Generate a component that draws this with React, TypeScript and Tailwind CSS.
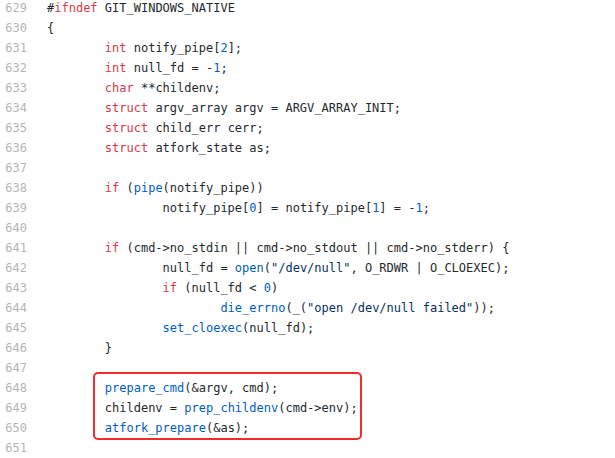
import React from "react";

type Tok = [string, string?];

const K = "text-[#d73a49]";
const F = "text-[#005cc5]";
const N = "text-[#005cc5]";
const S = "text-[#032f62]";

const T = "\t";

const lines: { n: number; t: Tok[] }[] = [
  { n: 629, t: [["#"], ["ifndef", K], [" GIT_WINDOWS_NATIVE"]] },
  { n: 630, t: [["{"]] },
  { n: 631, t: [[T], ["int", K], [" notify_pipe["], ["2", N], ["];"]] },
  { n: 632, t: [[T], ["int", K], [" null_fd = -"], ["1", N], [";"]] },
  { n: 633, t: [[T], ["char", K], [" **childenv;"]] },
  { n: 634, t: [[T], ["struct", K], [" argv_array argv = ARGV_ARRAY_INIT;"]] },
  { n: 635, t: [[T], ["struct", K], [" child_err cerr;"]] },
  { n: 636, t: [[T], ["struct", K], [" atfork_state as;"]] },
  { n: 637, t: [] },
  { n: 638, t: [[T], ["if", K], [" ("], ["pipe", F], ["(notify_pipe))"]] },
  { n: 639, t: [[T + T + "notify_pipe["], ["0", N], ["] = notify_pipe["], ["1", N], ["] = -"], ["1", N], [";"]] },
  { n: 640, t: [] },
  { n: 641, t: [[T], ["if", K], [" (cmd->no_stdin || cmd->no_stdout || cmd->no_stderr) {"]] },
  { n: 642, t: [[T + T + "null_fd = "], ["open", F], ["("], ['"/dev/null"', S], [", O_RDWR | O_CLOEXEC);"]] },
  { n: 643, t: [[T + T], ["if", K], [" (null_fd < "], ["0", N], [")"]] },
  { n: 644, t: [[T + T + T], ["die_errno", F], ["(_("], ['"open /dev/null failed"', S], ["));"]] },
  { n: 645, t: [[T + T], ["set_cloexec", F], ["(null_fd);"]] },
  { n: 646, t: [[T + "}"]] },
  { n: 647, t: [] },
];

const boxed: { n: number; t: Tok[] }[] = [
  { n: 648, t: [[T], ["prepare_cmd", F], ["(&argv, cmd);"]] },
  { n: 649, t: [[T + "childenv = "], ["prep_childenv", F], ["(cmd->env);"]] },
  { n: 650, t: [[T], ["atfork_prepare", F], ["(&as);"]] },
];

const after = [{ n: 651, t: [] as Tok[] }];

function Row({ n, t }: { n: number; t: Tok[] }) {
  return (
    <div className="flex h-[20px] items-center">
      <div className="w-[27px] shrink-0 text-right text-[#b5b6b8]">{n}</div>
      <div className="ml-[20px] whitespace-pre [tab-size:8]">
        {t.map((tok, i) => (
          <span key={i} className={tok[1] ?? ""}>
            {tok[0]}
          </span>
        ))}
      </div>
    </div>
  );
}

export default function App() {
  return (
    <div
      className="w-[615px] h-[458px] overflow-hidden bg-white text-[12px] text-[#24292e]"
      style={{ fontFamily: '"DejaVu Sans Mono", monospace' }}
    >
      <div className="mt-[-2px]">
        {lines.map((l) => (
          <Row key={l.n} {...l} />
        ))}
        <div className="relative">
          {boxed.map((l) => (
            <Row key={l.n} {...l} />
          ))}
          <div className="pointer-events-none absolute left-[93px] top-[-6px] h-[68px] w-[269px] rounded-[5px] border-2 border-[#f52a2a]" />
        </div>
        {after.map((l) => (
          <Row key={l.n} {...l} />
        ))}
      </div>
    </div>
  );
}
